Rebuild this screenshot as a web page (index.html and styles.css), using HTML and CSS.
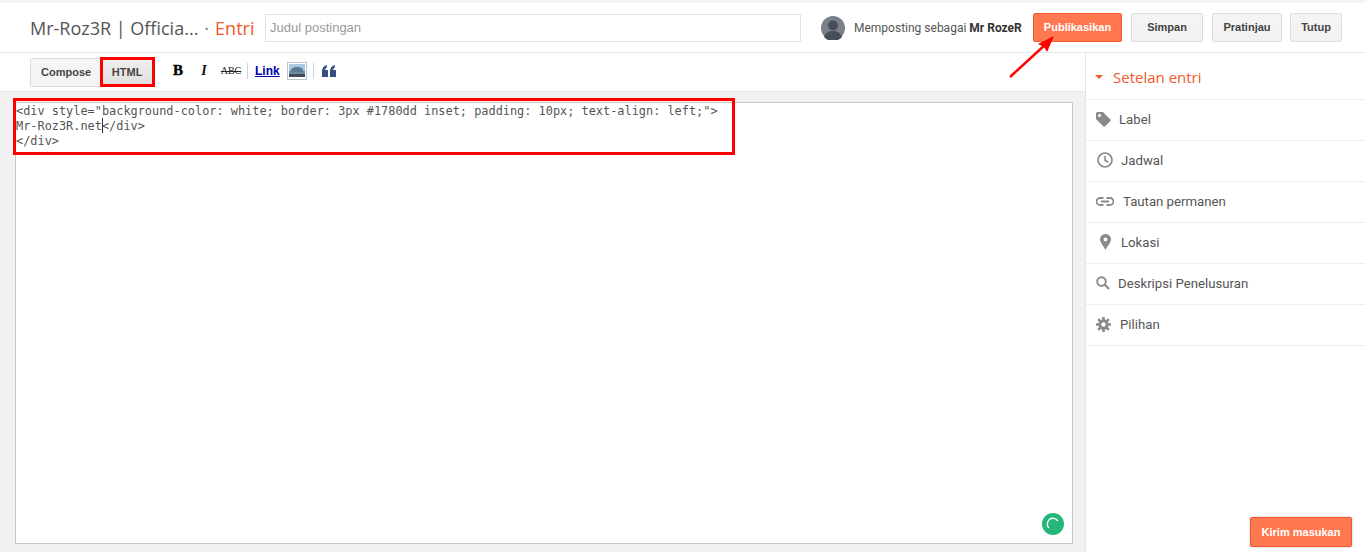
FILE: index.html
```html
<!DOCTYPE html>
<html lang="id">
<head>
<meta charset="utf-8">
<title>Entri</title>
<link rel="stylesheet" href="styles.css">
</head>
<body>
<div class="app">
  <header class="header">
    <div class="title"><span>Mr-Roz3R | Officia...</span><span class="dot">·</span><span class="entri">Entri</span></div>
    <div class="title-input">Judul postingan</div>
    <div class="user">
      <svg class="avatar" width="24" height="24" viewBox="0 0 24 24"><circle cx="12" cy="12" r="12" fill="#7a818c"/><circle cx="12" cy="9.500" r="5" fill="#474e58"/><path d="M3 21c2-5 5-6 9-6s7 1 9 6a12 12 0 0 1-18 0z" fill="#474e58"/></svg>
      <span class="user-text">Memposting sebagai <b>Mr RozeR</b></span>
    </div>
    <div class="actions">
      <div class="btn primary">Publikasikan</div>
      <div class="btn w-simpan">Simpan</div>
      <div class="btn w-pratinjau">Pratinjau</div>
      <div class="btn w-tutup">Tutup</div>
    </div>
  </header>
  <div class="main">
    <div class="content">
      <div class="toolbar">
        <div class="tabs"><div class="tab">Compose</div><div class="tab active">HTML</div></div>
        <div class="tools">
          <span class="t-b">B</span>
          <span class="t-i">I</span>
          <span class="t-abc">ABC</span>
          <span class="sep"></span>
          <span class="t-link">Link</span>
          <span class="t-img"><svg width="16" height="13" viewBox="0 0 16 13"><rect width="16" height="13" fill="#a9c8e4"/><rect y="7" width="16" height="3" fill="#6f8ca3"/><path d="M2 8V5l4-2h4l4 2v3z" fill="#5d7a90"/><rect y="10" width="16" height="3" fill="#3d4c58"/></svg></span>
          <span class="sep"></span>
          <svg class="t-quote" width="14" height="12" viewBox="0 0 14 12"><path fill="#35507f" d="M0 12V6.500C0 3 1.500 1 5 0v2.300C3.800 2.900 3.300 3.800 3.300 5H6v7zM8 12V6.500C8 3 9.500 1 13 0v2.300c-1.200.6-1.700 1.500-1.700 2.700H14v7z"/></svg>
        </div>
      </div>
      <div class="editor-wrap">
        <div class="editor">
          <div class="code">&lt;div style="background-color: white; border: 3px #1780dd inset; padding: 10px; text-align: left;"&gt;
Mr-Roz3R.net<span class="caret"></span>&lt;/div&gt;
&lt;/div&gt;</div>
          <div class="grammarly"><svg width="22" height="22" viewBox="0 0 22 22"><circle cx="11" cy="11" r="11" fill="#25b67a"/><path d="M6.500 14.500A5.500 5.500 0 0 1 15.500 7.500" fill="none" stroke="#fff" stroke-width="1.400" stroke-linecap="round"/></svg></div>
        </div>
      </div>
    </div>
    <aside class="sidebar">
      <div class="side-head"><span class="caret-down"></span>Setelan entri</div>
      <div class="side-row">
        <svg class="ico i-label" width="15" height="15" viewBox="0 0 15 15"><path fill="#8a8a8a" d="M0 1.500A1.500 1.500 0 0 1 1.500 0H7l7.500 7.500a1 1 0 0 1 0 1.400l-5.600 5.600a1 1 0 0 1-1.400 0L0 7zM3.500 5a1.500 1.500 0 1 0 0-3 1.500 1.500 0 0 0 0 3z"/></svg>
        <span>Label</span>
      </div>
      <div class="side-row">
        <svg class="ico i-clock" width="16" height="16" viewBox="0 0 16 16"><circle cx="8" cy="8" r="7" fill="none" stroke="#8a8a8a" stroke-width="1.700"/><path d="M8 3.800V8.300l3.200 2" fill="none" stroke="#8a8a8a" stroke-width="1.600"/></svg>
        <span>Jadwal</span>
      </div>
      <div class="side-row">
        <svg class="ico i-link" width="18" height="9" viewBox="0 0 18 9"><path fill="none" stroke="#8a8a8a" stroke-width="1.800" d="M7.500 1H4a3.500 3.500 0 0 0 0 7h3.500M10.500 1H14a3.500 3.500 0 0 1 0 7h-3.500M5 4.500h8"/></svg>
        <span>Tautan permanen</span>
      </div>
      <div class="side-row">
        <svg class="ico i-pin" width="11" height="16" viewBox="0 0 11 16"><path fill="#8a8a8a" fill-rule="evenodd" d="M5.500 0A5.300 5.300 0 0 1 11 5.300C11 9 7 12.500 5.500 16 4 12.500 0 9 0 5.300A5.300 5.300 0 0 1 5.500 0zm0 3.500a1.900 1.900 0 1 0 0 3.800 1.900 1.900 0 0 0 0-3.800z"/></svg>
        <span>Lokasi</span>
      </div>
      <div class="side-row">
        <svg class="ico i-search" width="14" height="14" viewBox="0 0 14 14"><circle cx="5.500" cy="5.500" r="4.300" fill="none" stroke="#8a8a8a" stroke-width="1.900"/><path d="M8.800 8.800L13 13" stroke="#8a8a8a" stroke-width="2.200"/></svg>
        <span>Deskripsi Penelusuran</span>
      </div>
      <div class="side-row">
        <svg class="ico i-gear" width="15" height="15" viewBox="0 0 15 15"><g stroke="#8a8a8a" stroke-width="2.600"><path d="M7.500 0v15M0 7.500h15M2.200 2.200l10.600 10.600M12.800 2.200L2.200 12.800"/></g><circle cx="7.500" cy="7.500" r="5.200" fill="#8a8a8a"/><circle cx="7.500" cy="7.500" r="2.200" fill="#fff"/></svg>
        <span>Pilihan</span>
      </div>
      <div class="btn primary feedback">Kirim masukan</div>
    </aside>
  </div>
  <div class="mark mark-html"></div>
  <div class="mark mark-code"></div>
  <svg class="arrow" width="52" height="46" viewBox="0 0 52 46"><path d="M2 44L38 11" stroke="#f00" stroke-width="2.400" fill="none"/><path d="M46 3L39 19 36 14 30 11z" fill="#f00"/></svg>
</div>
</body>
</html>
```
FILE: styles.css
```css
* { box-sizing: border-box; }
html, body { margin: 0; padding: 0; height: 552px; overflow: hidden; }
body { background: #fff; font-family: Roboto, "Liberation Sans", sans-serif; color: #444; }
.app { position: relative; width: 1365px; height: 552px; padding-top: 3px; background: #f4f4f4; display: flex; flex-direction: column; }

.header { height: 50px; flex: none; background: #fff; border-bottom: 1px solid #e5e5e5; display: flex; align-items: center; padding-left: 30px; }
.title { width: 235px; font-family: "Open Sans", Roboto, sans-serif; font-size: 18px; color: #555; white-space: nowrap; display: flex; }
.dot { margin: 0 6px; color: #777; }
.entri { color: #f1592a; }
.title-input { width: 536px; height: 28px; border: 1px solid #e2e2e2; border-radius: 1px; font: 13px/26px Arial, "Liberation Sans", sans-serif; color: #999; padding-left: 4px; }
.user { display: flex; align-items: center; margin-left: 20px; width: 212px; }
.avatar { flex: none; }
.user-text { margin-left: 9px; font-size: 12px; color: #555; white-space: nowrap; }
.user-text b { color: #333; font-weight: 700; }
.actions { display: flex; margin-top: -1px; }
.btn { height: 29px; border: 1px solid #dcdcdc; border-radius: 2px; background: linear-gradient(#f5f5f5, #f1f1f1); font: 700 11px/27px Arial, "Liberation Sans", sans-serif; color: #444; text-align: center; white-space: nowrap; }
.btn.primary { width: 89px; background: #ff7850; border-color: #f0592a; color: #fff; }
.w-simpan { width: 72px; margin-left: 9px; }
.w-pratinjau { width: 70px; margin-left: 9px; }
.w-tutup { width: 52px; margin-left: 8px; }

.main { flex: 1; display: flex; min-height: 0; }
.content { width: 1085px; flex: none; display: flex; flex-direction: column; }
.toolbar { height: 39px; flex: none; background: #fff; border-bottom: 1px solid #e5e5e5; display: flex; align-items: center; padding-left: 30px; }
.tabs { display: flex; border: 1px solid #dcdcdc; border-radius: 2px; height: 29px; width: 124px; }
.tab { font: 700 11px/27px Arial, "Liberation Sans", sans-serif; color: #444; padding-left: 10px; width: 70px; background: #f5f5f5; }
.tab.active { width: 54px; padding-left: 12px; background: linear-gradient(#eeeeee, #e0e0e0); }
.tools { display: flex; align-items: center; margin-left: 11px; height: 20px; margin-top: -3px; }
.t-b { font: 700 15px "Liberation Serif", serif; color: #000; width: 26px; text-align: center; -webkit-text-stroke: 0.4px #000; }
.t-i { font: italic 700 14px "Liberation Serif", serif; color: #111; width: 22px; text-align: center; margin-left: 2px; }
.t-abc { font: 10px "Liberation Serif", serif; color: #222; text-decoration: line-through; width: 22px; text-align: center; margin-left: 5px; }
.sep { width: 1px; height: 16px; background: #cbd3da; margin: 0 7px 0 5px; }
.t-link { font: 700 12px/16px Arial, "Liberation Sans", sans-serif; color: #00a; text-decoration: underline; width: 25px; white-space: nowrap; }
.t-img { width: 20px; height: 18px; border: 1px solid #b9c6d3; display: flex; align-items: center; justify-content: center; margin-left: 7px; margin-right: 1px; }
.t-quote { margin-left: 1px; }

.editor-wrap { flex: 1; min-height: 0; padding: 10px 12px 8px 15px; background: #f1f1f1; }
.editor { position: relative; height: 100%; border: 1px solid #c8c8c8; background: #fff; }
.code { font: 11.900px/15px "DejaVu Sans Mono", monospace; color: #555; white-space: pre; padding-top: 1px; }
.caret { position: relative; }
.caret::after { content: ""; position: absolute; left: 0; top: -1px; width: 1px; height: 15px; background: #333; }
.grammarly { position: absolute; right: 8px; bottom: 8px; width: 22px; height: 22px; line-height: 0; }

.sidebar { position: relative; flex: 1; background: #fff; border-left: 1px solid #e5e5e5; }
.side-head { height: 47px; border-bottom: 1px solid #eee; color: #f1592a; font-family: "Open Sans", Roboto, sans-serif; font-size: 15px; padding: 1px 0 0 9px; display: flex; align-items: center; }
.caret-down { width: 0; height: 0; border: 4px solid transparent; border-top: 4px solid #f1592a; border-bottom: 0; margin-right: 10px; }
.side-row { height: 41px; border-bottom: 1px solid #eee; display: flex; align-items: center; padding: 0 0 2px 10px; font-size: 13.200px; color: #555; }
.ico { flex: none; }
.i-label { margin-right: 8px; }
.i-clock { margin-right: 8px; margin-left: 1px; }
.i-link { margin-right: 9px; }
.i-pin { margin-right: 10px; margin-left: 4px; }
.i-search { margin-right: 8px; }
.i-gear { margin-right: 9px; }
.btn.primary.feedback { position: absolute; right: 13px; bottom: 5px; width: 102px; height: 30px; line-height: 28px; box-shadow: 0 0 2px rgba(0,0,0,.3); }

.mark { position: absolute; border: 3px solid #f00; }
.mark-html { left: 100px; top: 57px; width: 55px; height: 30px; }
.mark-code { left: 13px; top: 98px; width: 722px; height: 57px; }
.arrow { position: absolute; left: 1008px; top: 33px; }
```
